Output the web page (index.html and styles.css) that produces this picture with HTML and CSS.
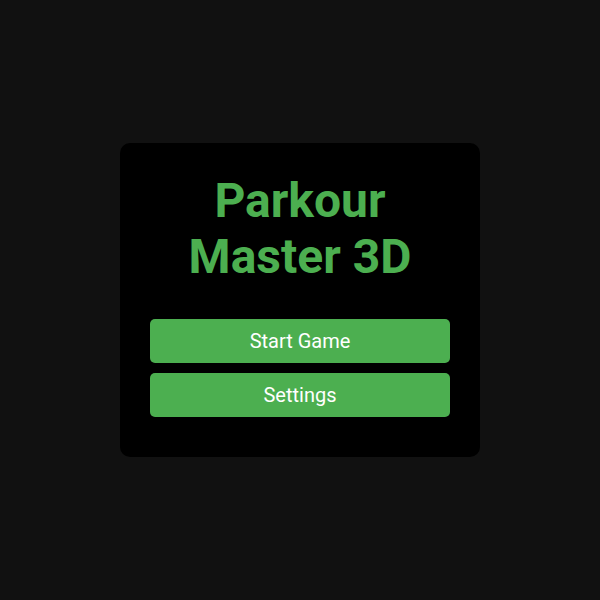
FILE: index.html
```html
<!DOCTYPE html>
<html>
<head>
<meta charset="utf-8">
<link rel="stylesheet" href="styles.css">
</head>
<body>
<div class="screen">
  <div class="menu">
    <h1 class="title">Parkour Master 3D</h1>
    <div class="buttons">
      <button class="btn">Start Game</button>
      <button class="btn">Settings</button>
    </div>
  </div>
</div>
</body>
</html>
```
FILE: styles.css
```css
html, body {
  margin: 0;
  padding: 0;
  background: #111111;
  font-family: Roboto, "Liberation Sans", sans-serif;
}
.screen {
  width: 600px;
  height: 600px;
  display: flex;
  align-items: center;
  justify-content: center;
}
.menu {
  width: 300px;
  padding: 30px 30px 40px;
  background: #000000;
  border-radius: 10px;
  display: flex;
  flex-direction: column;
  align-items: center;
}
.title {
  margin: 0 0 34px;
  color: #4caf50;
  font-size: 48px;
  line-height: 56px;
  font-weight: 700;
  text-align: center;
}
.buttons {
  width: 100%;
  display: flex;
  flex-direction: column;
  gap: 10px;
}
.btn {
  height: 44px;
  border: none;
  border-radius: 5px;
  background: #4caf50;
  color: #ffffff;
  font-family: Roboto, "Liberation Sans", sans-serif;
  font-size: 20px;
  padding: 0;
}
```
